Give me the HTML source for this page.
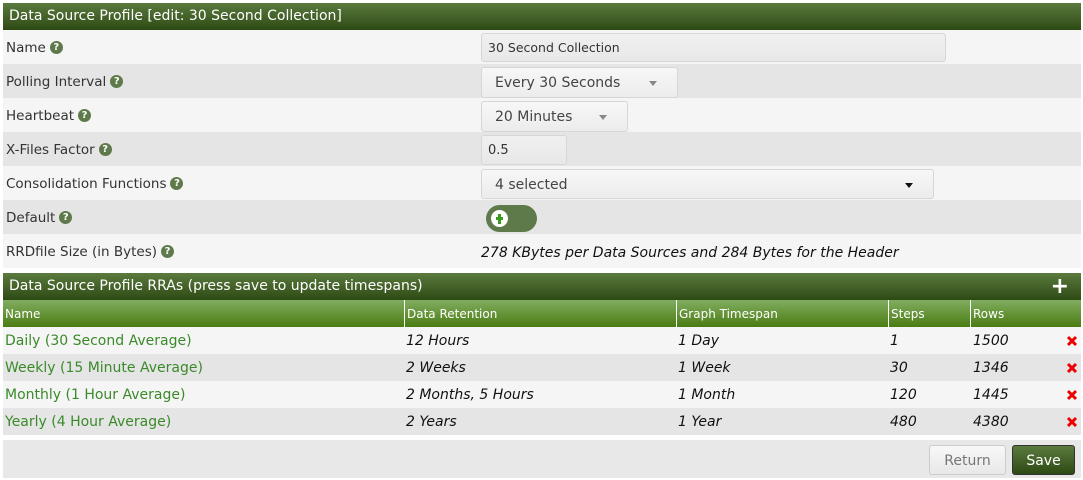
<!DOCTYPE html>
<html><head><style>
*{box-sizing:border-box;margin:0;padding:0}
body{width:1083px;height:480px;background:#fff;font-family:"DejaVu Sans",Verdana,sans-serif;font-size:13px;color:#333;position:relative;overflow:hidden}
.abs{position:absolute}
.hdr{left:3px;width:1078px;height:27px;background:linear-gradient(#5a7a3e,#2e4a14);color:#fff;font-size:14px;line-height:27px;padding-left:6px}
.row{left:3px;width:1078px;height:34px;line-height:34px;padding-left:3px;font-size:13.5px;padding-top:1px}
.a{background:#f5f5f5}.b{background:#e5e5e5}
.q{display:inline-block;width:13px;height:13px;border-radius:50%;background:#5e7a4a;color:#fff;font-size:10px;font-weight:bold;line-height:13px;text-align:center;vertical-align:middle;margin-left:4px;position:relative;top:-1px}
.inp{border:1px solid #d6d6d6;border-radius:3px;background:linear-gradient(#f0f0f0,#e8e8e8);font-size:12.5px;color:#333;padding-left:6px}
.sel{border:1px solid #d6d6d6;border-radius:3px;background:linear-gradient(#f7f7f7,#ececec);font-size:14px;color:#444;padding-left:13px}
.tri{position:absolute;top:13px;width:0;height:0;border-left:4px solid transparent;border-right:4px solid transparent;border-top:5px solid #888}
.th{left:3px;width:1078px;height:27px;background:linear-gradient(#80ad60,#4a7c12);color:#fff;font-size:12px}
.th span{position:absolute;top:0;line-height:29px;padding-left:2px;border-left:1px solid #fff;height:27px}
.tr{left:3px;width:1078px;height:27px;line-height:29px;font-size:14px}
.tr span{position:absolute;font-style:italic;color:#111}
.tr span.n{font-style:normal;color:#3a8a2a;left:2px}
.x{right:3px;top:8px;width:12px;height:12px}
</style></head><body>
<div class="abs hdr" style="top:3px">Data Source Profile [edit: 30 Second Collection]</div>
<div class="abs row a" style="top:30px">Name<span class="q">?</span></div>
<div class="abs row b" style="top:64px">Polling Interval<span class="q">?</span></div>
<div class="abs row a" style="top:98px">Heartbeat<span class="q">?</span></div>
<div class="abs row b" style="top:132px">X-Files Factor<span class="q">?</span></div>
<div class="abs row a" style="top:166px">Consolidation Functions<span class="q">?</span></div>
<div class="abs row b" style="top:200px">Default<span class="q">?</span></div>
<div class="abs row a" style="top:234px">RRDfile Size (in Bytes)<span class="q">?</span></div>
<div class="abs inp" style="left:481px;top:33px;width:465px;height:29px;line-height:28px">30 Second Collection</div>
<div class="abs sel" style="left:481px;top:67px;width:197px;height:31px;line-height:31px">Every 30 Seconds<div class="tri" style="left:167px"></div></div>
<div class="abs sel" style="left:481px;top:101px;width:147px;height:31px;line-height:31px">20 Minutes<div class="tri" style="left:117px"></div></div>
<div class="abs inp" style="left:481px;top:135px;width:86px;height:30px;line-height:30px;font-size:13px">0.5</div>
<div class="abs sel" style="left:481px;top:169px;width:453px;height:30px;line-height:30px">4 selected<div class="tri" style="left:423px;border-top-color:#111"></div></div>
<div class="abs" style="left:486px;top:205px;width:51px;height:27px;border-radius:14px;background:#5e7a4a"><svg class="abs" style="left:5px;top:5px" width="17" height="17" viewBox="0 0 17 17"><circle cx="8.5" cy="8.5" r="8.5" fill="#fff"/><path d="M7 4h3v3h2v3h-2v4h-3v-4h-2v-3h2z" fill="#3a9a1a"/></svg></div>
<div class="abs" style="left:481px;top:236px;line-height:34px;font-style:italic;font-size:14px;color:#111">278 KBytes per Data Sources and 284 Bytes for the Header</div>
<div class="abs hdr" style="top:273px">Data Source Profile RRAs (press save to update timespans)<span style="position:absolute;right:12px;font-size:22px;font-weight:bold">+</span></div>
<div class="abs th" style="top:300px"><span style="left:0;border:none">Name</span><span style="left:401px">Data Retention</span><span style="left:673px">Graph Timespan</span><span style="left:885px">Steps</span><span style="left:967px">Rows</span></div>
<div class="abs tr a" style="top:327px"><span class="n">Daily (30 Second Average)</span><span style="left:403px">12 Hours</span><span style="left:675px">1 Day</span><span style="left:887px">1</span><span style="left:970px">1500</span><svg class="abs x" viewBox="0 0 12 12"><path d="M2 2L10 10M10 2L2 10" stroke="#e00" stroke-width="3"/></svg></div>
<div class="abs tr b" style="top:354px"><span class="n">Weekly (15 Minute Average)</span><span style="left:403px">2 Weeks</span><span style="left:675px">1 Week</span><span style="left:887px">30</span><span style="left:970px">1346</span><svg class="abs x" viewBox="0 0 12 12"><path d="M2 2L10 10M10 2L2 10" stroke="#e00" stroke-width="3"/></svg></div>
<div class="abs tr a" style="top:381px"><span class="n">Monthly (1 Hour Average)</span><span style="left:403px">2 Months, 5 Hours</span><span style="left:675px">1 Month</span><span style="left:887px">120</span><span style="left:970px">1445</span><svg class="abs x" viewBox="0 0 12 12"><path d="M2 2L10 10M10 2L2 10" stroke="#e00" stroke-width="3"/></svg></div>
<div class="abs tr b" style="top:408px"><span class="n">Yearly (4 Hour Average)</span><span style="left:403px">2 Years</span><span style="left:675px">1 Year</span><span style="left:887px">480</span><span style="left:970px">4380</span><svg class="abs x" viewBox="0 0 12 12"><path d="M2 2L10 10M10 2L2 10" stroke="#e00" stroke-width="3"/></svg></div>
<div class="abs" style="left:3px;top:440px;width:1078px;height:38px;background:#e8e8e8"></div>
<div class="abs" style="left:929px;top:445px;width:77px;height:30px;border:1px solid #ccc;border-radius:3px;background:linear-gradient(#f8f8f8,#e8e8e8);color:#777;font-size:14px;text-align:center;line-height:30px">Return</div>
<div class="abs" style="left:1012px;top:445px;width:63px;height:30px;border:1px solid #333;border-radius:3px;background:linear-gradient(#5a7a3e,#2e4a14);color:#fff;font-size:14px;text-align:center;line-height:30px">Save</div>
</body></html>
